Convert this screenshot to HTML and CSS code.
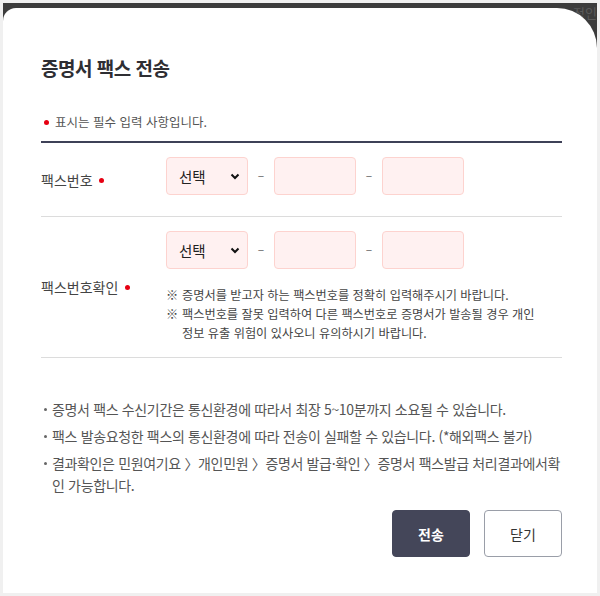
FILE: index.html
```html
<!DOCTYPE html>
<html lang="ko">
<head>
  <meta charset="UTF-8" />
  <title>증명서 팩스 전송</title>
  <link rel="stylesheet" href="styles.css">
</head>
<body>
  <div class="backdrop">
    <span class="behind">정인</span>
    <div class="modal">
      <h2 class="modal-title">증명서 팩스 전송</h2>
      <p class="req-note"><i class="dot"></i>표시는 필수 입력 사항입니다.</p>

      <div class="form-row">
        <label class="form-label">팩스번호 <i class="dot"></i></label>
        <div class="form-field">
          <div class="fax-line">
            <span class="sel">
              <select><option>선택</option></select>
              <svg class="chev" width="10" height="7" viewBox="0 0 10 7"><path d="M1.5 1.5 L5 5 L8.5 1.5" fill="none" stroke="#111" stroke-width="2"/></svg>
            </span>
            <span class="dash">–</span>
            <input type="text" class="num" />
            <span class="dash">–</span>
            <input type="text" class="num" />
          </div>
        </div>
      </div>

      <div class="form-row">
        <label class="form-label">팩스번호확인 <i class="dot"></i></label>
        <div class="form-field">
          <div class="fax-line">
            <span class="sel">
              <select><option>선택</option></select>
              <svg class="chev" width="10" height="7" viewBox="0 0 10 7"><path d="M1.5 1.5 L5 5 L8.5 1.5" fill="none" stroke="#111" stroke-width="2"/></svg>
            </span>
            <span class="dash">–</span>
            <input type="text" class="num" />
            <span class="dash">–</span>
            <input type="text" class="num" />
          </div>
          <ul class="notes">
            <li>증명서를 받고자 하는 팩스번호를 정확히 입력해주시기 바랍니다.</li>
            <li>팩스번호를 잘못 입력하여 다른 팩스번호로 증명서가 발송될 경우 개인 정보 유출 위험이 있사오니 유의하시기 바랍니다.</li>
          </ul>
        </div>
      </div>

      <ul class="guide">
        <li>증명서 팩스 수신기간은 통신환경에 따라서 최장 5~10분까지 소요될 수 있습니다.</li>
        <li>팩스 발송요청한 팩스의 통신환경에 따라 전송이 실패할 수 있습니다. (*해외팩스 불가)</li>
        <li>결과확인은 민원여기요 〉개인민원 〉증명서 발급·확인 〉증명서 팩스발급 처리결과에서확인 가능합니다.</li>
      </ul>

      <div class="btns">
        <button class="btn primary">전송</button>
        <button class="btn">닫기</button>
      </div>
    </div>
  </div>
</body>
</html>
```

FILE: styles.css
```css
body {
  margin: 0;
  padding: 3px;
  background: #f0f0f0;
  font-family: "Noto Sans CJK KR", "Noto Sans", sans-serif;
  color: #333;
}
.backdrop {
  position: relative;
  background: #3c3c3c;
  padding-top: 5px;
  width: 594px;
  height: 585px;
  overflow: hidden;
}
.behind {
  position: absolute;
  right: 0;
  top: 3px;
  font-size: 13px;
  line-height: 13px;
  color: #5a5a5a;
}
.modal {
  position: relative;
  background: #fff;
  border-radius: 13px 40px 0 0;
  height: 585px;
  box-sizing: border-box;
  padding: 47px 35px 0 38px;
}
.modal-title {
  margin: 0;
  font-size: 19px;
  line-height: 26px;
  font-weight: bold;
  color: #2e2e33;
  letter-spacing: -0.5px;
}
.dot {
  display: inline-block;
  width: 5px;
  height: 5px;
  border-radius: 50%;
  background: #e60012;
  vertical-align: middle;
}
.req-note {
  margin: 32px 0 0 0;
  padding-bottom: 10px;
  border-bottom: 2px solid #3e4157;
  font-size: 12.5px;
  line-height: 18px;
  color: #555;
}
.req-note .dot {
  margin: 0 6px 3px 3px;
}
.form-row {
  display: flex;
  align-items: center;
  border-bottom: 1px solid #dcdcdc;
}
.form-label {
  width: 125px;
  flex: none;
  font-size: 14px;
  color: #444;
}
.form-label .dot {
  margin: 0 0 3px 3px;
}
.form-field {
  padding: 14px 0 21px 0;
}
.form-row + .form-row .form-field {
  padding-bottom: 14px;
}
.fax-line {
  display: flex;
  align-items: center;
}
.sel {
  position: relative;
}
.sel select, .num {
  width: 82px;
  height: 38px;
  box-sizing: border-box;
  border: 1px solid #fdd3cf;
  border-radius: 4px;
  background: #fff1f1;
  outline: none;
  font-family: inherit;
}
.sel select {
  appearance: none;
  -webkit-appearance: none;
  padding: 0 0 0 12px;
  font-size: 14.5px;
  color: #222;
}
.chev {
  position: absolute;
  right: 8px;
  top: 16px;
  pointer-events: none;
}
.dash {
  width: 26px;
  text-align: center;
  color: #666;
  font-size: 12px;
  margin-top: -4px;
}
.notes {
  list-style: none;
  margin: 17px 0 0 0;
  padding: 0;
  width: 385px;
  font-size: 12.2px;
  line-height: 19px;
  color: #444;
  word-break: keep-all;
}
.notes li {
  position: relative;
  padding-left: 16px;
}
.notes li::before {
  content: "※";
  position: absolute;
  left: 0;
}
.guide {
  list-style: none;
  margin: 40px 0 0 0;
  padding: 0;
  font-size: 14px;
  line-height: 22px;
  color: #555;
}
.guide li {
  position: relative;
  padding-left: 11px;
  margin-bottom: 5px;
  letter-spacing: -0.35px;
  word-break: break-all;
}
.guide li::before {
  content: "";
  position: absolute;
  left: 3px;
  top: 10px;
  width: 3px;
  height: 3px;
  border-radius: 50%;
  background: #666;
}
.btns {
  display: flex;
  justify-content: flex-end;
  gap: 14px;
  margin-top: 14px;
}
.btn {
  width: 78px;
  height: 47px;
  border-radius: 4px;
  border: 1px solid #9a9ea8;
  background: #fff;
  font-family: inherit;
  font-size: 14px;
  color: #333;
}
.btn.primary {
  background: #444659;
  border-color: #444659;
  color: #fff;
  font-weight: bold;
}
```
